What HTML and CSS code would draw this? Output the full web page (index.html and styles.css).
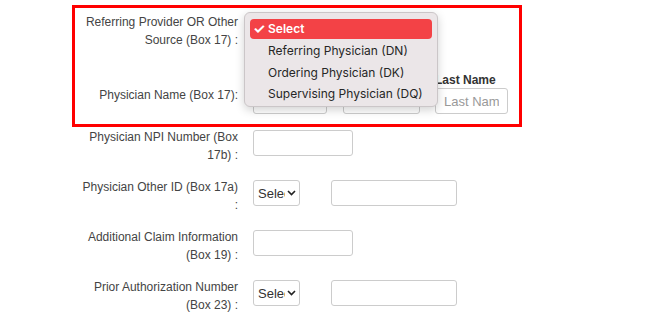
FILE: index.html
```html
<!DOCTYPE html>
<html lang="en">
<head>
  <meta charset="UTF-8" />
  <meta name="viewport" content="width=device-width, initial-scale=1.0" />
  <title>Claim Form - Box 17</title>
  <link rel="stylesheet" href="styles.css">
</head>
<body>

  <form class="claim-form">

    <div class="highlight-box">
      <div class="form-row">
        <label class="field-label">Referring Provider OR Other Source (Box 17) :</label>
        <div class="field-controls">
          <span class="select-wrap wide">
            <select class="small-select"><option>Select</option></select>
          </span>
        </div>
      </div>

      <div class="form-row name-row">
        <label class="field-label">Physician Name (Box 17):</label>
        <div class="field-controls name-fields">
          <!-- first / middle labels sit under the open menu -->
          <div class="name-field first">
            <span class="sub-label covered">First Name</span>
            <input type="text" class="text-input" />
          </div>
          <div class="name-field middle">
            <span class="sub-label covered">Middle</span>
            <input type="text" class="text-input" />
          </div>
          <div class="name-field last">
            <span class="sub-label">Last Name</span>
            <input type="text" class="text-input" placeholder="Last Name" />
          </div>
        </div>
      </div>

      <!-- popup of the open select, drawn over the fields -->
      <div class="select-popup">
        <div class="popup-item selected"><span class="check">&#10003;</span>Select</div>
        <div class="popup-item">Referring Physician (DN)</div>
        <div class="popup-item">Ordering Physician (DK)</div>
        <div class="popup-item">Supervising Physician (DQ)</div>
      </div>
    </div>

    <div class="form-row">
      <label class="field-label">Physician NPI Number (Box 17b) :</label>
      <div class="field-controls">
        <input type="text" class="text-input medium" />
      </div>
    </div>

    <div class="form-row">
      <label class="field-label">Physician Other ID (Box 17a) :</label>
      <div class="field-controls">
        <span class="select-wrap">
          <select class="small-select"><option>Select</option></select>
          <svg class="chevron" width="9" height="6" viewBox="0 0 9 6"><path d="M1 1l3.5 3.5L8 1" fill="none" stroke="#222" stroke-width="1.6"/></svg>
        </span>
        <input type="text" class="text-input long" />
      </div>
    </div>

    <div class="form-row">
      <label class="field-label">Additional Claim Information (Box 19) :</label>
      <div class="field-controls">
        <input type="text" class="text-input medium" />
      </div>
    </div>

    <div class="form-row">
      <label class="field-label">Prior Authorization Number (Box 23) :</label>
      <div class="field-controls">
        <span class="select-wrap">
          <select class="small-select"><option>Select</option></select>
          <svg class="chevron" width="9" height="6" viewBox="0 0 9 6"><path d="M1 1l3.5 3.5L8 1" fill="none" stroke="#222" stroke-width="1.6"/></svg>
        </span>
        <input type="text" class="text-input long" />
      </div>
    </div>

  </form>

</body>
</html>
```

FILE: styles.css
```css
* {
  box-sizing: border-box;
  margin: 0;
  padding: 0;
}

html, body {
  background: #fff;
  font-family: 'Liberation Sans', Arial, sans-serif;
  font-size: 12px;
  color: #444;
  width: 100%;
  height: 100%;
  overflow: hidden;
}

.claim-form {
  margin-left: 72px;
  padding-top: 5px;
  width: 450px;
}

/* Red box around the physician block */
.highlight-box {
  position: relative;
  border: 3px solid #f00;
  padding: 5px 8px 10px 5px;
  margin-bottom: 1px;
}

.form-row {
  display: grid;
  grid-template-columns: 158px auto;
  column-gap: 15px;
  padding-left: 8px;
  margin-bottom: 14px;
}

.highlight-box .form-row {
  padding-left: 0;
  margin-bottom: 0;
}

.field-label {
  text-align: right;
  line-height: 18px;
}

.field-controls {
  display: flex;
  align-items: flex-start;
  gap: 31px;
  padding-top: 2px;
}

.text-input {
  height: 26px;
  border: 1px solid #ccc;
  border-radius: 3px;
  padding: 0 8px;
  font-family: inherit;
  font-size: 13px;
  color: #555;
  background: #fff;
}

.text-input::placeholder {
  color: #999;
}

.text-input.medium { width: 100px; }
.text-input.long { width: 126px; }

.select-wrap {
  position: relative;
  display: inline-block;
  width: 47px;
  height: 26px;
}

.select-wrap.wide {
  width: 150px;
}

.small-select {
  appearance: none;
  -webkit-appearance: none;
  width: 100%;
  height: 26px;
  border: 1px solid #ccc;
  border-radius: 3px;
  background: #fff;
  font-family: inherit;
  font-size: 13px;
  color: #333;
  padding: 0 14px 0 4px;
  overflow: hidden;
}

.chevron {
  position: absolute;
  right: 4px;
  top: 10px;
  pointer-events: none;
}

/* name row */
.name-row {
  margin-top: 23px;
}

.name-row .field-label {
  margin-top: 14px;
}

.name-fields {
  gap: 15px;
  padding-top: 0;
}

.name-field {
  display: flex;
  flex-direction: column;
}

.sub-label {
  font-size: 12px;
  font-weight: 700;
  color: #333;
  line-height: 16px;
}

.sub-label.covered {
  visibility: hidden;
}

.name-field.first .text-input { width: 74px; }
.name-field.middle .text-input { width: 77px; margin-left: 1px; }
.name-field.last .text-input { width: 73px; }

/* native select menu (open) */
.select-popup {
  position: absolute;
  left: 169px;
  top: 4px;
  width: 194px;
  height: 95px;
  background: #ebe6e8;
  border: 1px solid #cbc6c8;
  border-radius: 6px;
  box-shadow: 0 3px 10px rgba(0, 0, 0, 0.18);
  padding: 6px 5px 5px;
  font-family: Inter, 'Noto Sans', sans-serif;
  font-size: 12px;
  color: #262626;
  white-space: nowrap;
}

.popup-item {
  height: 21.5px;
  line-height: 21px;
  padding-left: 18px;
  position: relative;
}

.popup-item.selected {
  height: 20px;
  line-height: 20px;
  background: #f34246;
  color: #fff;
  border-radius: 4px;
  font-weight: 600;
  margin-bottom: 1px;
}

.check {
  position: absolute;
  left: 3px;
  font-size: 14px;
  font-weight: 700;
}
```
